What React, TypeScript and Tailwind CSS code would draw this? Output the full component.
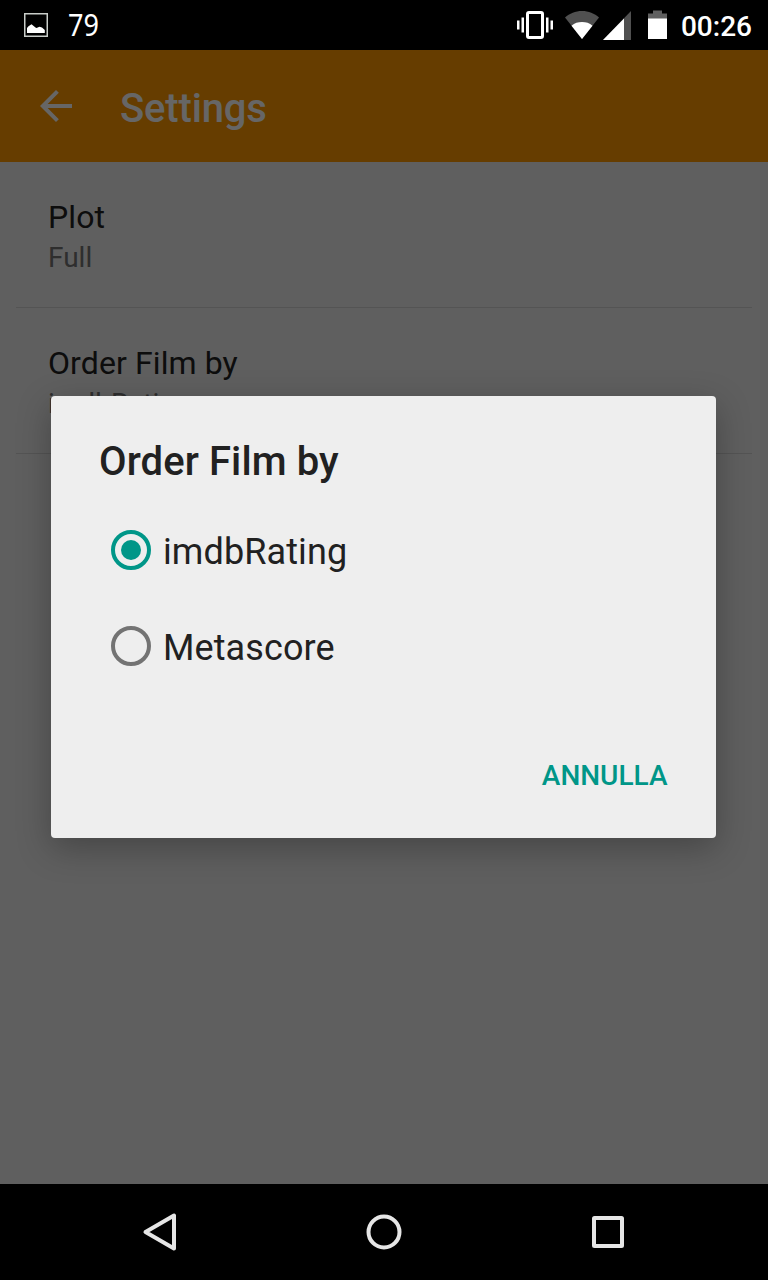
import React from "react";

function StatusBar() {
  return (
    <div className="flex h-[50px] shrink-0 items-center justify-between bg-black pl-6 pr-4 text-white">
      <div className="flex items-center gap-5">
        <svg width="24" height="24" viewBox="0 0 24 24" fill="none">
          <rect x="0.75" y="0.75" width="22.5" height="22.5" stroke="#c9cdc9" strokeWidth="1.5" />
          <path d="M3 20V15L4.5 13.3L7.5 11.3L11.5 14.6L12.5 15L15.5 13.7L18 14.5L20.8 17V20Z" fill="#fff" />
        </svg>
        <span className="origin-left scale-x-[0.9] font-['Noto_Sans',sans-serif] text-[30px] leading-[36px]">79</span>
      </div>
      <div className="flex items-center">
        <svg width="36" height="30" viewBox="0 0 36 30" fill="none">
          <rect x="10.5" y="2.5" width="15" height="25" rx="1.5" stroke="#fff" strokeWidth="3" />
          <path d="M5.75 7.5V22.5M30.25 7.5V22.5M1.25 10.5V19.5M34.75 10.5V19.5" stroke="#fff" strokeWidth="2.5" />
        </svg>
        <svg className="ml-3" width="34" height="30" viewBox="0 0 34 30">
          <path d="M17 29L0 7.5C4.5 3.5 10.5 1 17 1S29.5 3.5 34 7.5Z" fill="#505050" />
          <path d="M17 29L6.5 15.7C9.5 13 13 12 17 12S24.5 13 27.5 15.7Z" fill="#fff" />
        </svg>
        <svg className="ml-1" width="28" height="30" viewBox="0 0 28 30">
          <path d="M28 1V30H0Z" fill="#505050" />
          <path d="M21 8.5V30H0Z" fill="#fff" />
        </svg>
        <svg className="ml-[17px]" width="19" height="30" viewBox="0 0 19 30">
          <path d="M5 0.5H14V3.5H19V9H0V3.5H5Z" fill="#606060" />
          <path d="M0 8.5H19V29H0Z" fill="#fff" />
        </svg>
        <span className="ml-[14px] pt-1 text-[28px] font-medium leading-[34px]">00:26</span>
      </div>
    </div>
  );
}

function AppBar() {
  return (
    <header className="flex h-28 shrink-0 items-center bg-[#ff9800] pl-8 text-white">
      <svg width="48" height="48" viewBox="0 0 24 24" fill="currentColor">
        <path d="M20 11H7.83l5.59-5.59L12 4l-8 8 8 8 1.41-1.41L7.83 13H20v-2z" />
      </svg>
      <h1 className="ml-10 pt-1.5 text-[40px] font-medium leading-[48px] tracking-[-0.15px]">Settings</h1>
    </header>
  );
}

function Preference({ title, summary }: { title: string; summary: string }) {
  return (
    <div className="mx-4 h-[146px] border-b border-[#d2d2d2] px-8 pt-[34px]">
      <div className="text-[32px] leading-[43px] tracking-[0.1px] text-[#212121]">{title}</div>
      <div className="text-[28px] leading-[38px] text-[#737373]">{summary}</div>
    </div>
  );
}

function RadioOption({ label, checked }: { label: string; checked: boolean }) {
  return (
    <div className="flex h-24 items-center pl-[60px]" role="radio" aria-checked={checked}>
      <span
        className={
          checked
            ? "flex size-10 items-center justify-center rounded-full border-4 border-[#009688]"
            : "size-10 rounded-full border-4 border-[#737373]"
        }
      >
        {checked && <span className="size-5 rounded-full bg-[#009688]" />}
      </span>
      <span className="ml-3 pt-1 text-[36px] leading-[44px] tracking-[0.1px]">{label}</span>
    </div>
  );
}

function OrderDialog() {
  return (
    <div
      role="dialog"
      className="h-[442px] w-[665px] rounded bg-[#eeeeee] text-[#212121] shadow-[0_10px_34px_rgba(0,0,0,0.28)]"
    >
      <h2 className="pl-12 pt-[42px] text-[40px] font-medium leading-[48px] tracking-[0.1px]">Order Film by</h2>
      <div className="mt-4" role="radiogroup">
        <RadioOption label="imdbRating" checked />
        <RadioOption label="Metascore" checked={false} />
      </div>
      <div className="mt-[61px] flex justify-end pr-[48.5px]">
        <button className="text-[28px] font-medium leading-[42px] text-[#009688]">ANNULLA</button>
      </div>
    </div>
  );
}

function NavBar() {
  return (
    <nav className="flex h-24 shrink-0 items-center justify-between bg-black px-[136px]">
      <svg width="48" height="48" viewBox="0 0 48 48" fill="none" stroke="#e6e6e6" strokeWidth="4" strokeLinejoin="round">
        <path d="M9.5 24L38 7.5V40.5Z" />
      </svg>
      <svg width="48" height="48" viewBox="0 0 48 48" fill="none" stroke="#e6e6e6" strokeWidth="4">
        <circle cx="24" cy="24" r="15.5" />
      </svg>
      <svg width="48" height="48" viewBox="0 0 48 48" fill="none" stroke="#e6e6e6" strokeWidth="4" strokeLinejoin="round">
        <rect x="10" y="10" width="28" height="28" rx="0.5" />
      </svg>
    </nav>
  );
}

export default function App() {
  return (
    <div className="flex h-[1280px] w-[768px] flex-col overflow-hidden font-['Roboto',sans-serif]">
      <StatusBar />
      <main className="relative flex-1 bg-[#eeeeee]">
        <AppBar />
        <Preference title="Plot" summary="Full" />
        <Preference title="Order Film by" summary="imdbRating" />
        <div className="absolute inset-0 flex items-start justify-center bg-black/60 pr-px pt-[346px]">
          <OrderDialog />
        </div>
      </main>
      <NavBar />
    </div>
  );
}
